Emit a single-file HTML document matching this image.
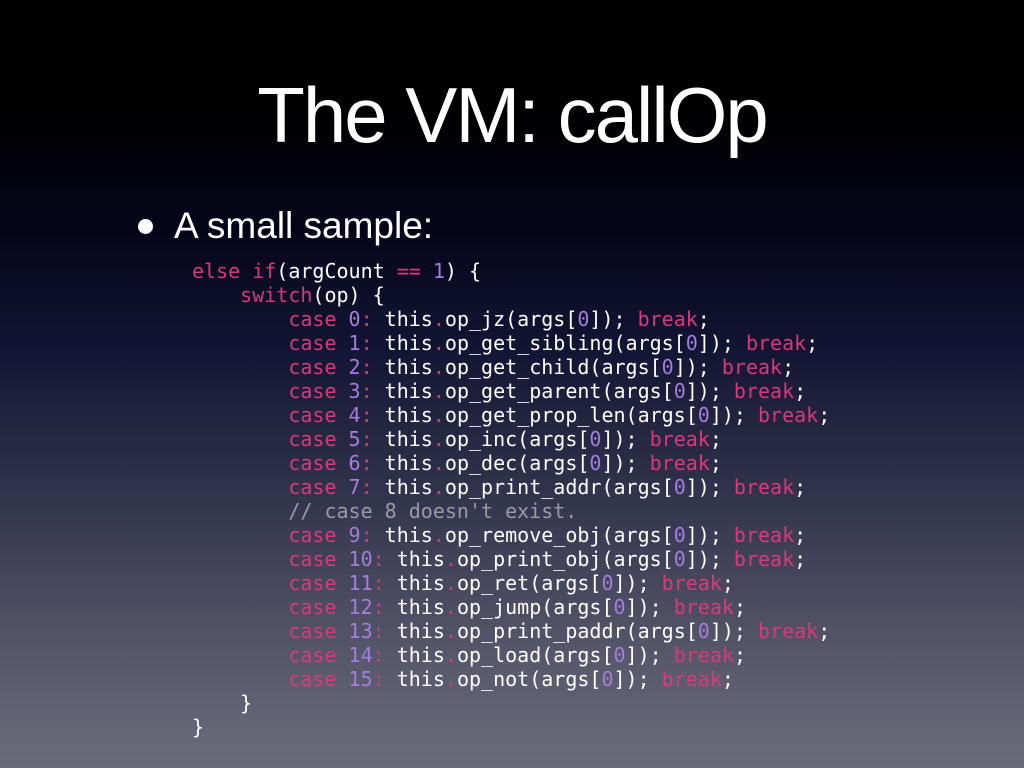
<!DOCTYPE html>
<html><head><style>
html,body{margin:0;padding:0;}
body{width:1024px;height:768px;overflow:hidden;position:relative;
background:linear-gradient(to bottom,#000 0%,#000 14%,#05051a 30%,#121433 45%,#33354e 65%,#56576a 85%,#6b6c7a 100%);
font-family:"Liberation Sans",sans-serif;color:#fff;}
h1{position:absolute;top:70px;left:0;width:1024px;text-align:center;margin:0;font-weight:normal;font-size:78px;letter-spacing:-2px;line-height:90px;}
.dot{position:absolute;left:138px;top:219px;width:15px;height:15px;border-radius:50%;background:#fff;}
.b{position:absolute;left:174px;top:204px;font-size:37px;line-height:44px;}
pre{position:absolute;left:192px;top:259px;margin:0;font-family:"DejaVu Sans Mono","Liberation Mono",monospace;font-size:20px;line-height:24px;color:#fff;}
.k{color:#d83a78}.n{color:#a37ddb}.c{color:#9a9aa6}
</style></head><body>
<h1>The VM: callOp</h1>
<div class="dot"></div>
<div class="b">A small sample:</div>
<pre><span class="k">else if</span>(argCount <span class="k">==</span> <span class="n">1</span>) {
    <span class="k">switch</span>(op) {
        <span class="k">case</span> <span class="n">0</span><span class="k">:</span> this<span class="k">.</span>op_jz(args[<span class="n">0</span>]); <span class="k">break</span>;
        <span class="k">case</span> <span class="n">1</span><span class="k">:</span> this<span class="k">.</span>op_get_sibling(args[<span class="n">0</span>]); <span class="k">break</span>;
        <span class="k">case</span> <span class="n">2</span><span class="k">:</span> this<span class="k">.</span>op_get_child(args[<span class="n">0</span>]); <span class="k">break</span>;
        <span class="k">case</span> <span class="n">3</span><span class="k">:</span> this<span class="k">.</span>op_get_parent(args[<span class="n">0</span>]); <span class="k">break</span>;
        <span class="k">case</span> <span class="n">4</span><span class="k">:</span> this<span class="k">.</span>op_get_prop_len(args[<span class="n">0</span>]); <span class="k">break</span>;
        <span class="k">case</span> <span class="n">5</span><span class="k">:</span> this<span class="k">.</span>op_inc(args[<span class="n">0</span>]); <span class="k">break</span>;
        <span class="k">case</span> <span class="n">6</span><span class="k">:</span> this<span class="k">.</span>op_dec(args[<span class="n">0</span>]); <span class="k">break</span>;
        <span class="k">case</span> <span class="n">7</span><span class="k">:</span> this<span class="k">.</span>op_print_addr(args[<span class="n">0</span>]); <span class="k">break</span>;
        <span class="c">// case 8 doesn't exist.</span>
        <span class="k">case</span> <span class="n">9</span><span class="k">:</span> this<span class="k">.</span>op_remove_obj(args[<span class="n">0</span>]); <span class="k">break</span>;
        <span class="k">case</span> <span class="n">10</span><span class="k">:</span> this<span class="k">.</span>op_print_obj(args[<span class="n">0</span>]); <span class="k">break</span>;
        <span class="k">case</span> <span class="n">11</span><span class="k">:</span> this<span class="k">.</span>op_ret(args[<span class="n">0</span>]); <span class="k">break</span>;
        <span class="k">case</span> <span class="n">12</span><span class="k">:</span> this<span class="k">.</span>op_jump(args[<span class="n">0</span>]); <span class="k">break</span>;
        <span class="k">case</span> <span class="n">13</span><span class="k">:</span> this<span class="k">.</span>op_print_paddr(args[<span class="n">0</span>]); <span class="k">break</span>;
        <span class="k">case</span> <span class="n">14</span><span class="k">:</span> this<span class="k">.</span>op_load(args[<span class="n">0</span>]); <span class="k">break</span>;
        <span class="k">case</span> <span class="n">15</span><span class="k">:</span> this<span class="k">.</span>op_not(args[<span class="n">0</span>]); <span class="k">break</span>;
    }
}</pre>
</body></html>
